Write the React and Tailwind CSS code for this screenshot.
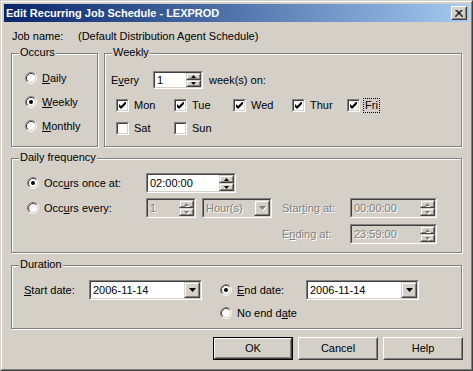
import React from 'react';

const dim = 'text-[#808080] [text-shadow:1px_1px_0_#fff]';

function Sunken({ className = '', disabled, children }) {
  return (
    <div className={`shrink-0 border border-t-[#808080] border-l-[#808080] border-b-white border-r-white ${className}`}>
      <div
        className={`h-full w-full flex items-center border border-t-[#404040] border-l-[#404040] border-b-[#d4d0c8] border-r-[#d4d0c8] ${
          disabled ? 'bg-[#d4d0c8]' : 'bg-white'
        }`}
      >
        {children}
      </div>
    </div>
  );
}

function Raised({ className = '', children }) {
  return (
    <div className={`shrink-0 bg-[#d4d0c8] border border-t-[#d4d0c8] border-l-[#d4d0c8] border-b-[#404040] border-r-[#404040] ${className}`}>
      <div className="h-full w-full flex items-center justify-center border border-t-white border-l-white border-b-[#808080] border-r-[#808080]">
        {children}
      </div>
    </div>
  );
}

function Arrow({ up, disabled, big }) {
  const fill = disabled ? '#808080' : '#000';
  if (big) {
    return (
      <svg width="7" height="4" viewBox="0 0 7 4" className="shrink-0 overflow-visible">
        {disabled && <polygon points="1,1 8,1 4.5,5" fill="#fff" />}
        <polygon points="0,0 7,0 3.5,4" fill={fill} />
      </svg>
    );
  }
  return (
    <svg width="5" height="3" viewBox="0 0 5 3" className="shrink-0 overflow-visible">
      {disabled && <polygon points={up ? '1,4 3.5,1 6,4' : '1,1 6,1 3.5,4'} fill="#fff" />}
      <polygon points={up ? '0,3 2.5,0 5,3' : '0,0 5,0 2.5,3'} fill={fill} />
    </svg>
  );
}

function Combo({ value, className, disabled }) {
  return (
    <Sunken className={`h-[20px] ${className}`} disabled={disabled}>
      <span className={`flex-1 pl-[2px] whitespace-nowrap overflow-hidden ${disabled ? dim : ''}`}>{value}</span>
      <Raised className="w-[16px] h-full">
        <Arrow big disabled={disabled} />
      </Raised>
    </Sunken>
  );
}

function Spin({ value, className, disabled }) {
  return (
    <Sunken className={className} disabled={disabled}>
      <span className={`flex-1 pl-[2px] whitespace-nowrap ${disabled ? dim : ''}`}>{value}</span>
      <div className="w-[15px] h-full flex flex-col">
        <Raised className="flex-1 w-full">
          <Arrow up disabled={disabled} />
        </Raised>
        <Raised className="flex-1 w-full">
          <Arrow disabled={disabled} />
        </Raised>
      </div>
    </Sunken>
  );
}

function Radio({ checked }) {
  return (
    <svg width="12" height="12" viewBox="0 0 12 12" className="shrink-0">
      <circle cx="6" cy="6" r="4.5" fill="#fff" />
      <path d="M2.11 9.89 A5.5 5.5 0 0 1 9.89 2.11" fill="none" stroke="#808080" />
      <path d="M9.89 2.11 A5.5 5.5 0 0 1 2.11 9.89" fill="none" stroke="#fff" />
      <path d="M2.82 9.18 A4.5 4.5 0 0 1 9.18 2.82" fill="none" stroke="#404040" />
      <path d="M9.18 2.82 A4.5 4.5 0 0 1 2.82 9.18" fill="none" stroke="#d4d0c8" />
      {checked && <circle cx="6" cy="6" r="2" fill="#000" />}
    </svg>
  );
}

function Check({ checked }) {
  return (
    <div className="w-[13px] h-[13px] shrink-0 border border-t-[#808080] border-l-[#808080] border-b-white border-r-white">
      <div className="w-full h-full bg-white flex items-center justify-center border border-t-[#404040] border-l-[#404040] border-b-[#d4d0c8] border-r-[#d4d0c8]">
        {checked && (
          <svg width="7" height="7" viewBox="0 0 7 7">
            <path d="M0 2 L2 4 L7 -1 L7 2 L2 7 L0 5 Z" fill="#000" />
          </svg>
        )}
      </div>
    </div>
  );
}

function Group({ label, className = '', children }) {
  return (
    <div className={`relative shrink-0 border border-[#808080] shadow-[inset_1px_1px_0_#fff,1px_1px_0_#fff] ${className}`}>
      <span className="absolute left-[7px] -top-[8px] px-[1px] bg-[#d4d0c8] leading-[13px] whitespace-nowrap">{label}</span>
      {children}
    </div>
  );
}

function Day({ label, checked = true, className = '', focus }) {
  return (
    <div className={`flex items-center gap-[5px] ${className}`}>
      <Check checked={checked} />
      {focus ? (
        <span className="border border-dotted border-black px-[1px] -ml-[2px] leading-[13px]">{label}</span>
      ) : (
        <span>{label}</span>
      )}
    </div>
  );
}

function Button({ children, isDefault }) {
  const body = (
    <div className="h-full w-full bg-[#d4d0c8] border border-t-white border-l-white border-b-[#404040] border-r-[#404040]">
      <div className="h-full w-full flex items-center justify-center border border-transparent border-b-[#808080] border-r-[#808080]">
        {children}
      </div>
    </div>
  );
  if (isDefault) {
    return <div className="w-[80px] h-[23px] border border-black">{body}</div>;
  }
  return <div className="w-[80px] h-[23px]">{body}</div>;
}

export default function App() {
  return (
    <div className="w-[473px] h-[371px] bg-[#d4d0c8] text-black text-[11px] leading-[13px] [font-family:'Liberation_Sans',Arial,sans-serif] border border-t-[#d4d0c8] border-l-[#d4d0c8] border-b-[#404040] border-r-[#404040]">
      <div className="h-full flex flex-col p-[2px] border border-t-white border-l-white border-b-[#808080] border-r-[#808080]">
        {/* Title bar */}
        <div className="h-[18px] shrink-0 flex items-center justify-between pl-[2px] pr-[2px] bg-linear-to-r from-[#0a246a] to-[#a6caf0]">
          <span className="text-white font-bold whitespace-nowrap">Edit Recurring Job Schedule - LEXPROD</span>
          <div className="w-[16px] h-[14px]">
            <div className="h-full w-full bg-[#d4d0c8] border border-t-white border-l-white border-b-[#404040] border-r-[#404040]">
              <div className="h-full w-full flex items-center justify-center border border-transparent border-b-[#808080] border-r-[#808080]">
                <svg width="8" height="7" viewBox="0 0 8 7">
                  <path d="M0.5 0 L7.5 7 M7.5 0 L0.5 7 M1.5 0 L8.5 7 M6.5 0 L-0.5 7" stroke="#000" strokeWidth="1" />
                </svg>
              </div>
            </div>
          </div>
        </div>

        <div className="px-[7px] flex flex-col">
          {/* Job name */}
          <div className="mt-[8px] flex h-[13px]">
            <span className="w-[67px] pl-[1px]">Job name:</span>
            <span>(Default Distribution Agent Schedule)</span>
          </div>

          {/* Occurs + Weekly */}
          <div className="mt-[10px] flex gap-[6px]">
            <Group label="Occurs" className="w-[87px] h-[94px]">
              <div className="flex flex-col pt-[12px] pl-[13px]">
                <div className="h-[24px] flex items-center gap-[5px]">
                  <Radio />
                  <span><u>D</u>aily</span>
                </div>
                <div className="h-[24px] flex items-center gap-[5px]">
                  <Radio checked />
                  <span><u>W</u>eekly</span>
                </div>
                <div className="h-[24px] flex items-center gap-[5px]">
                  <Radio />
                  <span><u>M</u>onthly</span>
                </div>
              </div>
            </Group>

            <Group label="Weekly" className="flex-1 h-[94px]">
              <div className="flex flex-col pt-[16px]">
                <div className="h-[20px] flex items-center pl-[6px]">
                  <span className="w-[42px]">E<u>v</u>ery</span>
                  <Spin value="1" className="w-[50px] h-[18px]" />
                  <span className="ml-[6px]">week(s) on:</span>
                </div>
                <div className="mt-[7px] h-[16px] flex items-center pl-[11px]">
                  <Day label="Mon" className="w-[58px]" />
                  <Day label="Tue" className="w-[59px]" />
                  <Day label="Wed" className="w-[59px]" />
                  <Day label="Thur" className="w-[55px]" />
                  <Day label="Fri" focus />
                </div>
                <div className="mt-[7px] h-[16px] flex items-center pl-[11px]">
                  <Day label="Sat" checked={false} className="w-[58px]" />
                  <Day label="Sun" checked={false} />
                </div>
              </div>
            </Group>
          </div>

          {/* Daily frequency */}
          <Group label="Daily frequency" className="mt-[11px] h-[95px]">
            <div className="flex flex-col pt-[14px] pl-[15px]">
              <div className="h-[20px] flex items-center">
                <Radio checked />
                <span className="ml-[5px] w-[102px]">Occ<u>u</u>rs once at:</span>
                <Spin value="02:00:00" className="w-[90px] h-[20px]" />
              </div>
              <div className="mt-[5px] flex items-start">
                <div className="h-[20px] flex items-center">
                  <Radio />
                  <span className="ml-[5px] w-[102px]">Occ<u>u</u>rs every:</span>
                  <Spin value="1" disabled className="w-[50px] h-[20px]" />
                  <Combo value="Hour(s)" disabled className="ml-[6px] w-[70px]" />
                </div>
                <div className="ml-[10px] flex flex-col gap-[6px]">
                  <div className="h-[20px] flex items-center">
                    <span className={`w-[68px] ${dim}`}>Star<u>t</u>ing at:</span>
                    <Spin value="00:00:00" disabled className="w-[87px] h-[20px]" />
                  </div>
                  <div className="h-[20px] flex items-center">
                    <span className={`w-[68px] ${dim}`}>E<u>n</u>ding at:</span>
                    <Spin value="23:59:00" disabled className="w-[87px] h-[20px]" />
                  </div>
                </div>
              </div>
            </div>
          </Group>

          {/* Duration */}
          <Group label="Duration" className="mt-[12px] h-[64px]">
            <div className="flex items-start pt-[14px] pl-[12px]">
              <div className="h-[20px] flex items-center">
                <span className="w-[65px]"><u>S</u>tart date:</span>
                <Combo value="2006-11-14" className="w-[113px]" />
              </div>
              <div className="ml-[18px] flex flex-col">
                <div className="h-[20px] flex items-center">
                  <Radio checked />
                  <span className="ml-[5px] w-[69px]"><u>E</u>nd date:</span>
                  <Combo value="2006-11-14" className="w-[113px]" />
                </div>
                <div className="mt-[6px] h-[14px] flex items-center">
                  <Radio />
                  <span className="ml-[5px]">No end d<u>a</u>te</span>
                </div>
              </div>
            </div>
          </Group>

          {/* Buttons */}
          <div className="mt-[8px] flex justify-end gap-[5px] -mr-[1px]">
            <Button isDefault>OK</Button>
            <Button>Cancel</Button>
            <Button>Help</Button>
          </div>
        </div>
      </div>
    </div>
  );
}
